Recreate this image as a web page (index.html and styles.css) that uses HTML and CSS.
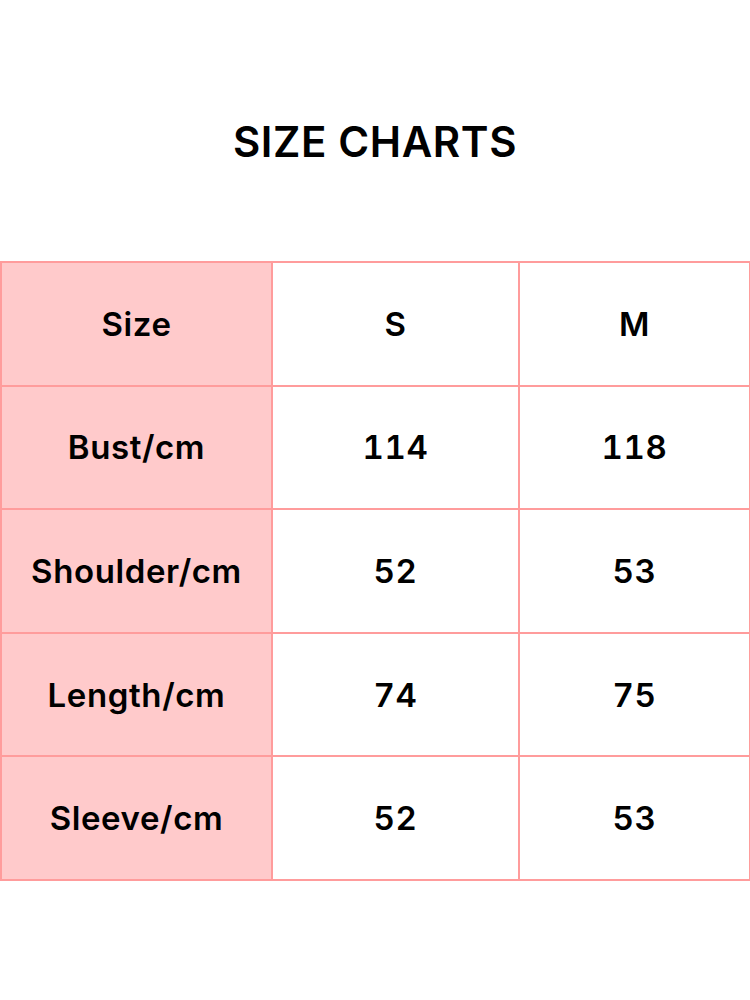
FILE: index.html
```html
<!DOCTYPE html>
<html>
<head>
<meta charset="utf-8">
<link rel="stylesheet" href="styles.css">
</head>
<body>
<div class="page">
  <h1 class="title">SIZE CHARTS</h1>
  <table class="chart">
    <colgroup><col class="c1"><col class="c2"><col class="c3"></colgroup>
    <tr><th>Size</th><td>S</td><td>M</td></tr>
    <tr><th>Bust/cm</th><td>114</td><td>118</td></tr>
    <tr><th>Shoulder/cm</th><td>52</td><td>53</td></tr>
    <tr><th>Length/cm</th><td>74</td><td>75</td></tr>
    <tr><th>Sleeve/cm</th><td>52</td><td>53</td></tr>
  </table>
</div>
</body>
</html>
```
FILE: styles.css
```css
html, body { margin: 0; padding: 0; background: #fff; }
body { font-family: Inter, "Liberation Sans", sans-serif; color: #000; }
.page { width: 750px; height: 1000px; padding-top: 116px; box-sizing: border-box; }
.title {
  margin: 0;
  text-align: center;
  font-size: 42px;
  line-height: 52px;
  font-weight: 600;
  letter-spacing: 0.6px;
}
.chart {
  margin-top: 93px;
  width: 749px;
  border-collapse: collapse;
  table-layout: fixed;
}
.c1 { width: 271px; }
.c2 { width: 247px; }
.c3 { width: 231px; }
.chart th, .chart td {
  border: 2px solid #ff9c9c;
  height: 121.6px;
  padding: 0;
  text-align: center;
  vertical-align: middle;
  font-size: 33px;
  font-weight: 600;
  letter-spacing: 0.6px;
  font-variant-numeric: tabular-nums;
}
.chart th { background: #ffcacb; }
```
